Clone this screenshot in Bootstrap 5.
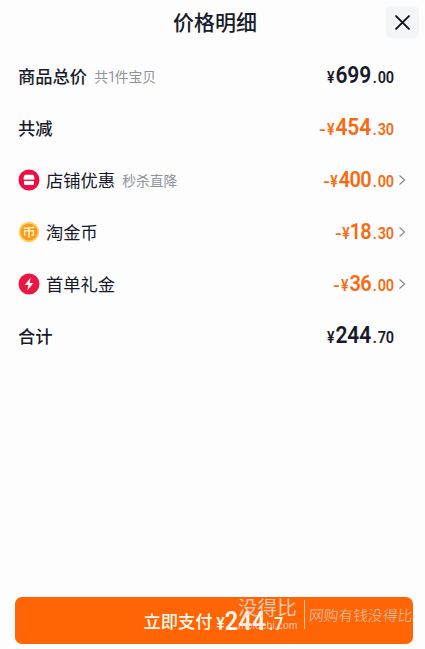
<!DOCTYPE html>
<html lang="zh-CN">
<head>
<meta charset="utf-8">
<meta name="viewport" content="width=device-width, initial-scale=1">
<title>价格明细</title>
<link href="https://cdn.jsdelivr.net/npm/bootstrap@5.3.0/dist/css/bootstrap.min.css" rel="stylesheet">
<style>
body{font-family:"Noto Sans CJK SC",sans-serif;color:#171b29;background:#fdfdfd;height:649px;overflow:hidden;line-height:1}
.sheet{height:649px}
.head{height:50px;padding-top:5px}
.title{font-size:21px;font-weight:500;line-height:32px;padding-left:5px}
.close-btn{width:33px;height:32px;right:6px;top:6px;background:#f3f6f8;border-radius:5px}
.line{height:52px;padding-left:18px;padding-right:18px}
.label{font-size:17.3px;line-height:26px}
.strong{font-weight:500}
.note{font-size:13.8px;line-height:26px;color:#8d929c;margin-left:7px}
.note-num{font-family:Roboto,sans-serif;margin:0 -1px 0 0}
.ico{width:22px;height:22px;margin:0 6px 0 0}
.price{font-family:Roboto,sans-serif;font-weight:600;line-height:26px;white-space:nowrap;transform:scaleY(1.12);transform-origin:50% 75%;padding-top:3px}
.orange{color:#f76b12}
.minus{display:inline-block;font-size:14px;transform:scaleX(1.35);margin-right:1.500px}
.yen{font-size:14px;letter-spacing:.9px}
.int{font-size:21px;letter-spacing:-.1px}
.tight .int{font-size:20px;letter-spacing:-.6px}
.one{letter-spacing:-.8px;margin-left:-1px}
.dot{font-size:14px;margin:0 1px 0 1.500px}
.dec{font-size:14.500px;letter-spacing:-.1px}
.arrow-slot{width:13px;height:26px;padding-left:4px}
.pay{margin:0 12px 5px 15px;height:47px;background:#ff6505;border-radius:7px;color:#fff8ec}
.pay-text{padding-left:128.500px;font-size:17.300px;font-weight:500;line-height:26px}
.pay .yen{font-size:16px;letter-spacing:.1px}
.pay .int{font-size:23.500px;letter-spacing:.2px}
.pay .dot{font-size:16px;margin:0 1px 0 3px}
.pay .dec{font-size:16px}
.pay .price{margin:2px 0 0 3.500px}
.wm{left:238px;top:596px;color:#eadbd2;opacity:.85}
.wm-name{font-size:19.600px;line-height:22px}
.wm-site{font-family:"Liberation Sans",sans-serif;font-size:10.500px;line-height:15px;width:59px}
.wm-bar{width:1px;height:29px;background:#f5d8c8;margin:4px 4px 0 7px}
.wm-slogan{font-size:14.800px;font-weight:300;line-height:37px;transform:skewX(-5deg)}
</style>
<script src="https://cdn.jsdelivr.net/npm/bootstrap@5.3.0/dist/js/bootstrap.bundle.min.js"></script>
</head>
<body>
<main class="sheet d-flex flex-column position-relative">
<header class="head text-center position-relative">
<h1 class="title m-0">价格明细</h1>
<button class="close-btn btn border-0 p-0 position-absolute d-flex align-items-center justify-content-center" aria-label="关闭"><svg width="15" height="15" viewBox="0 0 14 14" fill="none" stroke="#10131a" stroke-width="1.8" stroke-linecap="round"><path d="M1 1l12 12M13 1L1 13"/></svg></button>
</header>
<section class="flex-grow-1">
<div class="line d-flex align-items-center">
<span class="label strong">商品总价</span><span class="note">共<span class="note-num">1</span>件宝贝</span>
<span class="price ms-auto"><span class="yen">¥</span><span class="int">699</span><span class="dot">.</span><span class="dec">00</span></span><span class="arrow-slot"></span>
</div>
<div class="line d-flex align-items-center">
<span class="label strong">共减</span>
<span class="price orange ms-auto"><span class="minus">-</span><span class="yen">¥</span><span class="int">454</span><span class="dot">.</span><span class="dec">30</span></span><span class="arrow-slot"></span>
</div>
<div class="line d-flex align-items-center">
<svg class="ico" viewBox="0 0 22 22"><circle cx="11" cy="11" r="10.5" fill="#ef0d43"/><path d="M7.400 5.800h7.200q1 0 1.200 1l.8 2.700q0 1.300-1.400 1.300l-1.300-.4-1.300.4-1.600-.4-1.600.4-1.300-.4-1.300.4q-1.400 0-1.400-1.300L6.200 6.800q.2-1 1.200-1zM6 12q1 .3 2.100-.3 1.400.6 2.900 0 1.500.6 2.900 0 1.100.6 2.100.3v2.700q0 1.300-1.300 1.300H7.300Q6 16 6 14.700z" fill="#fff"/></svg>
<span class="label">店铺优惠</span><span class="note">秒杀直降</span>
<span class="price tight orange ms-auto"><span class="minus">-</span><span class="yen">¥</span><span class="int">400</span><span class="dot">.</span><span class="dec">00</span></span><span class="arrow-slot d-flex align-items-center"><svg width="8" height="12" viewBox="0 0 8 12" fill="none" stroke="#8b8f97" stroke-width="1.3"><path d="M1.500 1.500l5 4.500-5 4.500"/></svg></span>
</div>
<div class="line d-flex align-items-center">
<svg class="ico" viewBox="0 0 22 22"><circle cx="11" cy="11" r="10.300" fill="#ffd465"/><circle cx="11" cy="11" r="8.600" fill="#f89b20"/><path d="M6.200 7.200q5 0 9.600-1M6.600 14V9.700h8.800v3.700q0 .9-1.400.9M11 7v9.300" fill="none" stroke="#fff0b8" stroke-width="1.500" stroke-linecap="round" stroke-linejoin="round"/></svg>
<span class="label">淘金币</span>
<span class="price tight orange ms-auto"><span class="minus">-</span><span class="yen">¥</span><span class="int"><span class="one">1</span>8</span><span class="dot">.</span><span class="dec">30</span></span><span class="arrow-slot d-flex align-items-center"><svg width="8" height="12" viewBox="0 0 8 12" fill="none" stroke="#8b8f97" stroke-width="1.3"><path d="M1.500 1.500l5 4.500-5 4.500"/></svg></span>
</div>
<div class="line d-flex align-items-center">
<svg class="ico" viewBox="0 0 22 22"><circle cx="11" cy="11" r="10.500" fill="#e91742"/><path d="M12.600 4.800L6.700 12h3.700l-1.100 5.500 6.100-7.600h-3.800z" fill="#fff"/></svg>
<span class="label">首单礼金</span>
<span class="price tight orange ms-auto"><span class="minus">-</span><span class="yen">¥</span><span class="int">36</span><span class="dot">.</span><span class="dec">00</span></span><span class="arrow-slot d-flex align-items-center"><svg width="8" height="12" viewBox="0 0 8 12" fill="none" stroke="#8b8f97" stroke-width="1.3"><path d="M1.500 1.500l5 4.500-5 4.500"/></svg></span>
</div>
<div class="line d-flex align-items-center">
<span class="label strong">合计</span>
<span class="price ms-auto"><span class="yen">¥</span><span class="int">244</span><span class="dot">.</span><span class="dec">70</span></span><span class="arrow-slot"></span>
</div>
</section>
<button class="pay btn border-0 p-0 d-flex align-items-center">
<span class="pay-text">立即支付</span><span class="price"><span class="yen">¥</span><span class="int">244</span><span class="dot">.</span><span class="dec">7</span></span>
</button>
<div class="wm position-absolute d-flex text-nowrap">
<div><div class="wm-name">没得比</div><div class="wm-site">meidebi.com</div></div>
<div class="wm-bar"></div>
<div class="wm-slogan">网购有钱没得比</div>
</div>
</main>
</body>
</html>
